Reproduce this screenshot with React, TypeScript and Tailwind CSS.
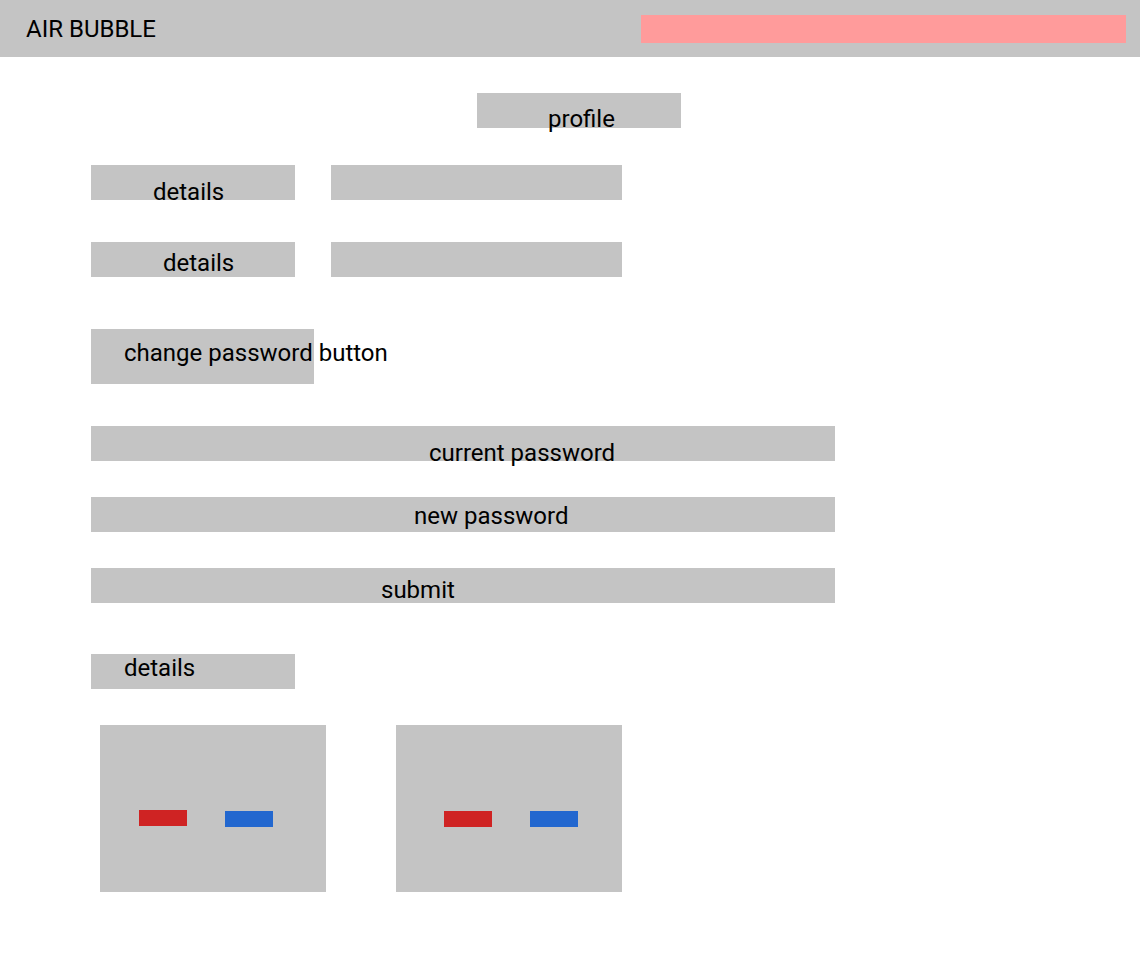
const boxText = 'whitespace-nowrap text-[24px] leading-[28px] text-black';

const Card = ({ redClass, blueClass }: { redClass: string; blueClass: string }) => (
  <div className="flex h-[167px] w-[226px] items-start bg-[#c4c4c4] pt-[85px]">
    <div className={`h-[16px] w-[48px] bg-[#cf2323] ${redClass}`} />
    <div className={`h-[16px] w-[48px] bg-[#2267cf] ${blueClass}`} />
  </div>
);

export default function App() {
  return (
    <div className="min-h-screen w-full bg-white font-['Roboto',sans-serif]">
      <header className="flex h-[57px] w-full items-start bg-[#c4c4c4]">
        <span className={`pl-[26px] pt-[15px] ${boxText}`}>AIR BUBBLE</span>
        <div className="ml-auto mr-[14px] mt-[15px] h-[28px] w-[485px] bg-[#ff9b9b]" />
      </header>

      <main className="flex flex-col items-start pl-[91px]">
        <div className="ml-[386px] mt-[36px] h-[35px] w-[204px] bg-[#c4c4c4] pl-[71px] pt-[12px]">
          <span className={boxText}>profile</span>
        </div>

        <div className="mt-[37px] flex gap-[36px]">
          <div className="h-[35px] w-[204px] bg-[#c4c4c4] pl-[62px] pt-[13px]">
            <span className={boxText}>details</span>
          </div>
          <div className="h-[35px] w-[291px] bg-[#c4c4c4]" />
        </div>

        <div className="mt-[42px] flex gap-[36px]">
          <div className="h-[35px] w-[204px] bg-[#c4c4c4] pl-[72px] pt-[7px]">
            <span className={boxText}>details</span>
          </div>
          <div className="h-[35px] w-[291px] bg-[#c4c4c4]" />
        </div>

        <button className="mt-[52px] flex h-[55px] w-[223px] items-start bg-[#c4c4c4] pl-[33px] pt-[10px] text-left">
          <span className={boxText}>change password button</span>
        </button>

        <div className="mt-[42px] h-[35px] w-[744px] bg-[#c4c4c4] pl-[338px] pt-[13px]">
          <span className={boxText}>current password</span>
        </div>

        <div className="mt-[36px] h-[35px] w-[744px] bg-[#c4c4c4] pl-[323px] pt-[5px]">
          <span className={boxText}>new password</span>
        </div>

        <button className="mt-[36px] flex h-[35px] w-[744px] items-start bg-[#c4c4c4] pl-[290px] pt-[8px] text-left">
          <span className={boxText}>submit</span>
        </button>

        <div className="mt-[51px] h-[35px] w-[204px] bg-[#c4c4c4] pl-[33px] pt-0">
          <span className={boxText}>details</span>
        </div>

        <div className="ml-[9px] mt-[36px] flex gap-[70px]">
          <Card redClass="ml-[39px]" blueClass="ml-[38px] mt-[1px]" />
          <Card redClass="ml-[48px] mt-[1px]" blueClass="ml-[38px] mt-[1px]" />
        </div>
      </main>
    </div>
  );
}
